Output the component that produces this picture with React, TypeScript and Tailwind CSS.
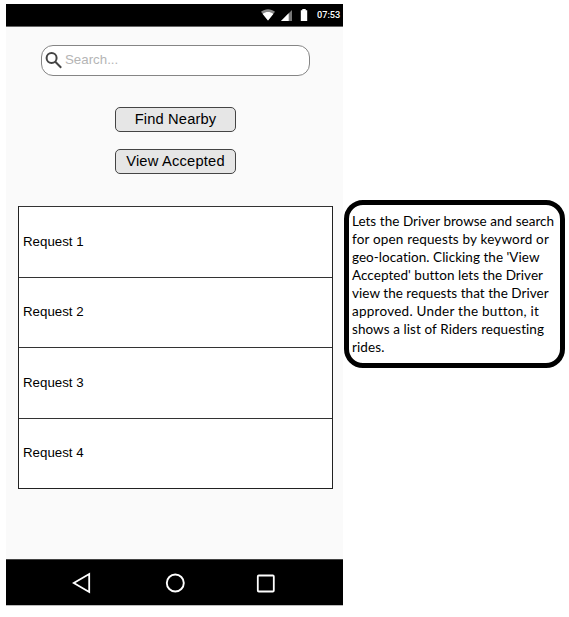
const requests = ["Request 1", "Request 2", "Request 3", "Request 4"];

const noteLines = [
  { text: "Lets the Driver browse and search", width: 202, tracking: "tracking-normal" },
  { text: "for open requests by keyword or", width: 197, tracking: "tracking-[0.15px]" },
  { text: "geo-location. Clicking the 'View", width: 186, tracking: "tracking-[0.04px]" },
  { text: "Accepted' button lets the Driver", width: 190, tracking: "tracking-[0.04px]" },
  { text: "view the requests that the Driver", width: 196, tracking: "tracking-[0.04px]" },
  { text: "approved. Under the button, it", width: 186, tracking: "tracking-[0.25px]" },
  { text: "shows a list of Riders requesting", width: 192, tracking: "tracking-[0.04px]" },
  { text: "rides.", width: 33, tracking: "tracking-[0.1px]" },
];

function StatusBar() {
  return (
    <div className="flex h-[23px] items-center justify-end border-b border-[#666] bg-black pr-[3px] text-white">
      <svg width="14" height="12" viewBox="0 0 14 12" className="mr-[6px]">
        <path d="M0 2.8C4 -.6 10 -.6 14 2.8L7 11.4Z" fill="#8a8a8a" />
        <path d="M1.7 4.9C5 2.5 9 2.5 12.3 4.9L7 11.4Z" fill="#fff" />
      </svg>
      <svg width="11" height="11" viewBox="0 0 11 11" className="mr-[8px]">
        <path d="M11 0V11H0Z" fill="#777" />
        <path d="M7.7 3.3V11H0Z" fill="#fff" />
      </svg>
      <svg width="8" height="12" viewBox="0 0 8 12" className="mr-[9px]">
        <path d="M2.3 0H5.7V1.3H7.2V12H.8V1.3H2.3Z" fill="#fff" />
      </svg>
      <span className="w-[23px] font-[Roboto,sans-serif] text-[9.2px] leading-none font-medium">07:53</span>
    </div>
  );
}

function NavBar() {
  return (
    <div className="flex h-[47px] items-center border-t border-b border-t-[#444] border-b-[#bbb] bg-black pl-[66px]">
      <svg width="20" height="22" viewBox="0 0 20 22" fill="none" stroke="#fff" strokeWidth="1.8">
        <path d="M17.2 2V20L1.8 11Z" />
      </svg>
      <svg width="20" height="20" viewBox="0 0 20 20" fill="none" stroke="#fff" strokeWidth="1.9" className="ml-[73px]">
        <circle cx="10.3" cy="10" r="8.5" />
      </svg>
      <svg width="20" height="20" viewBox="0 0 20 20" fill="none" stroke="#fff" strokeWidth="1.8" className="ml-[71px]">
        <rect x="1.8" y="2.5" width="16" height="16" rx="1" />
      </svg>
    </div>
  );
}

export default function App() {
  return (
    <div className="flex h-[617px] w-[569px] overflow-hidden bg-white pt-1 pl-[6px] font-['Liberation_Sans',sans-serif] text-black">
      <main className="flex h-[602px] w-[337px] shrink-0 flex-col bg-[#fafafa]">
        <StatusBar />
        <div className="flex flex-1 flex-col pt-[18px]">
          <label className="ml-[35px] flex h-[31px] w-[269px] items-center rounded-[12px] border border-[#858585] bg-white pl-[3px]">
            <svg width="18" height="18" viewBox="0 0 18 18" fill="none" stroke="#444" strokeWidth="2">
              <circle cx="6.6" cy="6.1" r="5" />
              <path d="M10.3 9.8L16.2 15.7" />
            </svg>
            <input
              placeholder="Search..."
              className="ml-[2px] w-[200px] pb-[2px] text-[13.3px] outline-none placeholder:text-[#b5b5b5]"
            />
          </label>
          <div className="mt-[31px] ml-[109px] flex flex-col gap-[17px]">
            <button className="h-[25px] w-[121px] rounded-[5px] border border-[#444] bg-[#e6e6e6] text-[14.7px] leading-[23px] tracking-[0.15px]">
              Find Nearby
            </button>
            <button className="h-[25px] w-[121px] rounded-[5px] border border-[#444] bg-[#e6e6e6] text-[14.7px] leading-[23px] tracking-[0.2px] whitespace-nowrap">
              View Accepted
            </button>
          </div>
          <ul className="mt-[32px] ml-[12px] grid h-[283px] w-[315px] grid-rows-4 border-x border-b border-[#222] bg-white">
            {requests.map((name) => (
              <li key={name} className="flex items-center border-t border-[#333] pl-[4px] text-[13.3px]">
                {name}
              </li>
            ))}
          </ul>
        </div>
        <NavBar />
      </main>
      <aside className="mt-[196px] ml-[1px] h-[168px] w-[221px] shrink-0 rounded-[19px] border-[5px] border-black bg-white pt-[7px] pl-[3px]">
        {noteLines.map((line) => (
          <p
            key={line.text}
            className={`h-[18px] font-[Lato,sans-serif] text-[13.5px] leading-[18px] whitespace-nowrap [font-variant-ligatures:none] [text-align-last:justify] ${line.tracking}`}
            style={{ width: line.width }}
          >
            {line.text}
          </p>
        ))}
      </aside>
    </div>
  );
}
